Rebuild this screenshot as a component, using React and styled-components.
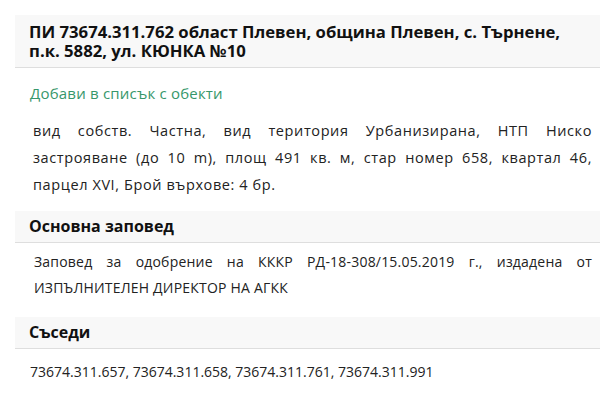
import React from 'react'
import styled, {createGlobalStyle} from 'styled-components'

const GlobalStyle = createGlobalStyle`
body {
  margin: 0;
  background: #fff;
  font-family: Tahoma, "Open Sans", "DejaVu Sans", sans-serif;
  color: #222;
}
`

const Page = styled.div`
padding: 15px 6px 0 15px;
`

const Title = styled.h1`
margin: 0;
padding: 7px 14px 7px 14px;
background: #f8f8f8;
border-bottom: 1px solid #dedede;
font-size: 16.7px;
line-height: 19px;
font-weight: 700;
color: #111;
`

const AddLink = styled.a`
display: block;
margin: 15px 0 0 15px;
font-size: 15px;
line-height: 20px;
letter-spacing: 0.2px;
color: #37976b;
text-decoration: none;
cursor: pointer;
`

const Text = styled.p`
margin: ${pr => pr.top}px 0 0 0;
padding: 0 8px 0 ${pr => pr.indent || 18}px;
font-size: ${pr => pr.size || 14}px;
line-height: ${pr => pr.lh || 26}px;
letter-spacing: ${pr => pr.ls || 0}px;
text-align: justify;
color: #222;
`

const SectionHeader = styled.h2`
margin: ${pr => pr.top}px 0 0 0;
padding: 0 14px;
background: #f8f8f8;
border-bottom: 1px solid #dedede;
font-size: 16px;
line-height: 31px;
font-weight: 700;
color: #111;
`

const App = () => {
    return(
        <Page>
            <GlobalStyle />
            <Title>ПИ 73674.311.762 област Плевен, община Плевен, с. Търнене, п.к. 5882, ул. КЮНКА №10</Title>
            <AddLink>Добави в списък с обекти</AddLink>
            <Text top={14} lh={27} size={14.5} ls={0.6}>вид собств. Частна, вид територия Урбанизирана, НТП Ниско застрояване (до 10 m), площ 491 кв. м, стар номер 658, квартал 46, парцел XVI, Брой върхове: 4 бр.</Text>
            <SectionHeader top={13}>Основна заповед</SectionHeader>
            <Text top={6} indent={19} ls={0.2}>Заповед за одобрение на КККР РД-18-308/15.05.2019 г., издадена от ИЗПЪЛНИТЕЛЕН ДИРЕКТОР НА АГКК</Text>
            <SectionHeader top={16}>Съседи</SectionHeader>
            <Text top={10} indent={15}>73674.311.657, 73674.311.658, 73674.311.761, 73674.311.991</Text>
        </Page>
    );
}

export default App;
